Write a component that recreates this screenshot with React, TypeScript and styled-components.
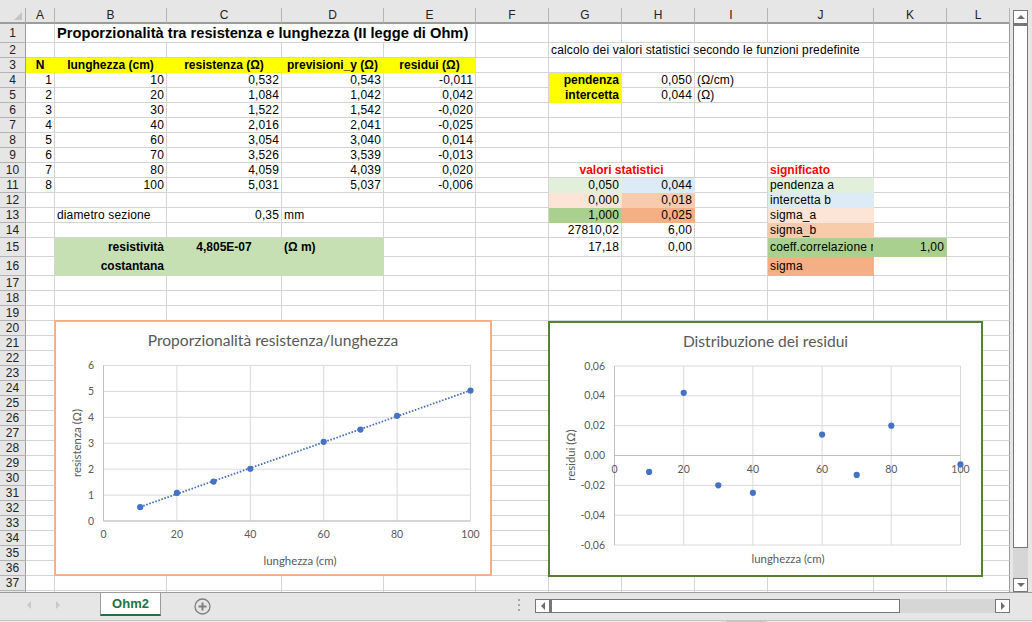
import { Fragment } from "react";
import styled, { createGlobalStyle } from "styled-components";

const COLS = ["A", "B", "C", "D", "E", "F", "G", "H", "I", "J", "K", "L"];
const COL_WIDTHS = [29, 112, 115, 102, 92, 73, 73, 73, 73, 106, 73, 63];
const ROW_COUNT = 38;

const YELLOW = "#ffff00";
const GREEN = "#c6e0b4";
const GREEN_LIGHT = "#e2efda";
const GREEN_DARK = "#a9d08e";
const BLUE = "#ddebf7";
const PEACH_LIGHT = "#fce4d6";
const PEACH = "#f8cbad";
const ORANGE = "#f4b084";

const rowHeight = (row: number) =>
  row === 1 || row === 15 || row === 16 ? 19 : 15;

const GlobalStyle = createGlobalStyle`
  html, body {
    margin: 0;
    padding: 0;
    background: #e6e6e6;
  }
`;

const Window = styled.div`
  width: 1032px;
  height: 622px;
  overflow: hidden;
  display: flex;
  flex-direction: column;
  background: #e6e6e6;
  font-family: "Liberation Sans", Arial, sans-serif;
  font-size: 12px;
  color: #000;
`;

const TopStrip = styled.div`
  height: 8px;
  flex: none;
`;

const Middle = styled.div`
  height: 584px;
  flex: none;
  display: flex;
`;

const Sheet = styled.div`
  position: relative;
  width: 1010px;
  height: 584px;
  overflow: hidden;
  background: #fff;
`;

const SheetGrid = styled.div`
  display: grid;
  grid-template-columns: 26px ${COL_WIDTHS.map((w) => `${w}px`).join(" ")};
  grid-template-rows: 16px ${Array.from(
    { length: ROW_COUNT },
    (_, i) => `${rowHeight(i + 1)}px`
  ).join(" ")};
`;

const Corner = styled.div`
  position: relative;
  background: #e6e6e6;
  border-right: 1px solid #ababab;
  border-bottom: 2px solid #9c9c9c;
  box-sizing: border-box;
  &::after {
    content: "";
    position: absolute;
    right: 3px;
    bottom: 2px;
    border-style: solid;
    border-width: 0 0 8px 8px;
    border-color: transparent transparent #c4c4c4 transparent;
  }
`;

const ColHeader = styled.div`
  background: #e6e6e6;
  box-sizing: border-box;
  border-right: 1px solid #b4b4b4;
  border-bottom: 2px solid #9c9c9c;
  display: flex;
  align-items: center;
  justify-content: center;
  font-size: 12px;
  color: #222;
`;

const RowHeader = styled.div`
  background: #e6e6e6;
  box-sizing: border-box;
  border-right: 1px solid #9c9c9c;
  border-bottom: 1px solid #b4b4b4;
  display: flex;
  align-items: center;
  justify-content: center;
  font-size: 12px;
  color: #222;
`;

const JUSTIFY = { left: "flex-start", right: "flex-end", center: "center" };

const Cell = styled.div<{
  $fill?: string;
  $bold?: boolean;
  $align?: "left" | "right" | "center";
  $color?: string;
  $span?: number;
  $size?: number;
  $edge?: boolean;
}>`
  box-sizing: border-box;
  min-width: 0;
  overflow: hidden;
  white-space: nowrap;
  display: flex;
  align-items: center;
  padding: 0 2px;
  grid-column: span ${(p) => p.$span ?? 1};
  justify-content: ${(p) => JUSTIFY[p.$align ?? "left"]};
  background: ${(p) => p.$fill ?? "#fff"};
  color: ${(p) => p.$color ?? "#000"};
  font-weight: ${(p) => (p.$bold ? 700 : 400)};
  font-size: ${(p) => p.$size ?? 12}px;
  letter-spacing: ${(p) => (p.$bold ? 0 : 0.14)}px;
  border-bottom: 1px solid ${(p) => p.$fill ?? "#d4d4d4"};
  border-right: 1px solid
    ${(p) => (p.$edge ? "#9c9c9c" : p.$fill ?? "#d4d4d4")};
`;

const ChartCard = styled.div<{ $border: string; $x: number; $y: number; $w: number; $h: number }>`
  position: absolute;
  box-sizing: border-box;
  left: ${(p) => p.$x}px;
  top: ${(p) => p.$y - 8}px;
  width: ${(p) => p.$w}px;
  height: ${(p) => p.$h}px;
  border: 2px solid ${(p) => p.$border};
  background: #fff;
  svg {
    display: block;
    width: 100%;
    height: 100%;
  }
`;

const ChartTitle = styled.text`
  font-family: Lato, "Open Sans", sans-serif;
  font-size: 15.6px;
  fill: #595959;
  text-anchor: middle;
`;

const AxisLabel = styled.text<{ $anchor?: string; $size?: number }>`
  font-family: Lato, "Open Sans", sans-serif;
  font-size: ${(p) => p.$size ?? 10.5}px;
  fill: #595959;
  text-anchor: ${(p) => p.$anchor ?? "middle"};
`;

const VScroll = styled.div`
  width: 15px;
  margin-left: 3px;
  padding-top: 2px;
  display: flex;
  flex-direction: column;
`;

const ScrollButton = styled.div<{ $w?: number }>`
  box-sizing: border-box;
  flex: none;
  width: ${(p) => p.$w ?? 15}px;
  height: 14px;
  background: #fff;
  border: 1px solid #777;
  display: flex;
  align-items: center;
  justify-content: center;
`;

const VThumb = styled.div`
  box-sizing: border-box;
  height: 524px;
  flex: none;
  background: #fff;
  border: 1px solid #777;
  border-top-width: 2px;
`;

const VTrack = styled.div`
  flex: 1;
  background: #d6d6d6;
`;

const Triangle = styled.span<{ $dir: "up" | "down" | "left" | "right"; $color?: string; $size?: number }>`
  width: 0;
  height: 0;
  border-style: solid;
  border-color: transparent;
  ${(p) => {
    const c = p.$color ?? "#6e6e6e";
    const s = p.$size ?? 4;
    if (p.$dir === "up") return `border-width: 0 ${s}px ${s}px; border-bottom-color: ${c};`;
    if (p.$dir === "down") return `border-width: ${s}px ${s}px 0; border-top-color: ${c};`;
    if (p.$dir === "left") return `border-width: ${s}px ${s}px ${s}px 0; border-right-color: ${c};`;
    return `border-width: ${s}px 0 ${s}px ${s}px; border-left-color: ${c};`;
  }}
`;

const TabBar = styled.div`
  box-sizing: border-box;
  flex: none;
  height: 29px;
  display: flex;
  align-items: flex-start;
  border-top: 1px solid #9c9c9c;
  border-bottom: 1px solid #c6c6c6;
`;

const TabNav = styled.div`
  width: 100px;
  height: 24px;
  flex: none;
  padding-left: 27px;
  box-sizing: border-box;
  display: flex;
  align-items: center;
  gap: 25px;
`;

const Tab = styled.div`
  box-sizing: border-box;
  width: 61px;
  height: 24px;
  flex: none;
  margin-top: -1px;
  background: #fff;
  border: 1px solid #9c9c9c;
  border-top: 1px solid #9c9c9c;
  border-bottom: 2px solid #217346;
  display: flex;
  align-items: center;
  justify-content: center;
  font-weight: 700;
  font-size: 13px;
  color: #217346;
`;

const AddSheet = styled.svg`
  flex: none;
  width: 17px;
  height: 17px;
  margin: 5px 0 0 33px;
`;

const Grip = styled.div`
  flex: none;
  margin: 6px 0 0 307px;
  display: flex;
  flex-direction: column;
  gap: 3px;
  span {
    width: 2px;
    height: 2px;
    background: #a6a6a6;
  }
`;

const HScroll = styled.div`
  flex: none;
  width: 475px;
  height: 14px;
  margin: 6px 0 0 15px;
  display: flex;
  background: #d6d6d6;
`;

const HThumb = styled.div`
  box-sizing: border-box;
  flex: none;
  width: 350px;
  background: #fff;
  border: 1px solid #777;
  border-left-width: 2px;
`;

const HSpacer = styled.div`
  flex: 1;
`;

const BottomEdge = styled.div`
  flex: 1;
  position: relative;
  &::after {
    content: "";
    position: absolute;
    left: 726px;
    top: 0;
    width: 40px;
    height: 1px;
    background: #c6c6c6;
  }
`;

type CellSpec = {
  text?: string;
  fill?: string;
  bold?: boolean;
  align?: "left" | "right" | "center";
  color?: string;
  span?: number;
  size?: number;
};

const cells: Record<string, CellSpec> = {
  B1: { text: "Proporzionalità tra resistenza e lunghezza (II legge di Ohm)", bold: true, span: 4, size: 14.67 },
  G2: { text: "calcolo dei valori statistici secondo le funzioni predefinite", span: 4 },
  G4: { text: "pendenza", fill: YELLOW, bold: true, align: "right" },
  G5: { text: "intercetta", fill: YELLOW, bold: true, align: "right" },
  H4: { text: "0,050", align: "right" },
  H5: { text: "0,044", align: "right" },
  I4: { text: "(Ω/cm)" },
  I5: { text: "(Ω)" },
  A3: { text: "N", fill: YELLOW, bold: true, align: "center" },
  B3: { text: "lunghezza (cm)", fill: YELLOW, bold: true, align: "center" },
  C3: { text: "resistenza (Ω)", fill: YELLOW, bold: true, align: "center" },
  D3: { text: "previsioni_y (Ω)", fill: YELLOW, bold: true, align: "center" },
  E3: { text: "residui (Ω)", fill: YELLOW, bold: true, align: "center" },
  B13: { text: "diametro sezione" },
  C13: { text: "0,35", align: "right" },
  D13: { text: "mm" },
  B15: { text: "resistività", fill: GREEN, bold: true, align: "right" },
  C15: { text: "4,805E-07", fill: GREEN, bold: true, align: "center" },
  D15: { text: "(Ω m)", fill: GREEN, bold: true },
  B16: { text: "costantana", fill: GREEN, bold: true, align: "right" },
  C16: { fill: GREEN },
  D16: { fill: GREEN },
  G10: { text: "valori statistici", bold: true, align: "center", color: "#ff0000", span: 2 },
  J10: { text: "significato", bold: true, color: "#ff0000" },
  G11: { text: "0,050", fill: GREEN_LIGHT, align: "right" },
  H11: { text: "0,044", fill: BLUE, align: "right" },
  G12: { text: "0,000", fill: PEACH_LIGHT, align: "right" },
  H12: { text: "0,018", fill: PEACH, align: "right" },
  G13: { text: "1,000", fill: GREEN_DARK, align: "right" },
  H13: { text: "0,025", fill: ORANGE, align: "right" },
  G14: { text: "27810,02", align: "right" },
  H14: { text: "6,00", align: "right" },
  G15: { text: "17,18", align: "right" },
  H15: { text: "0,00", align: "right" },
  J11: { text: "pendenza a", fill: GREEN_LIGHT },
  J12: { text: "intercetta b", fill: BLUE },
  J13: { text: "sigma_a", fill: PEACH_LIGHT },
  J14: { text: "sigma_b", fill: PEACH },
  J15: { text: "coeff.correlazione r", fill: GREEN_DARK },
  K15: { text: "1,00", fill: GREEN_DARK, align: "right" },
  J16: { text: "sigma", fill: ORANGE },
};

const measures = [
  [1, 10, "0,532", "0,543", "-0,011"],
  [2, 20, "1,084", "1,042", "0,042"],
  [3, 30, "1,522", "1,542", "-0,020"],
  [4, 40, "2,016", "2,041", "-0,025"],
  [5, 60, "3,054", "3,040", "0,014"],
  [6, 70, "3,526", "3,539", "-0,013"],
  [7, 80, "4,059", "4,039", "0,020"],
  [8, 100, "5,031", "5,037", "-0,006"],
];

measures.forEach((m, i) => {
  ["A", "B", "C", "D", "E"].forEach((col, c) => {
    cells[`${col}${i + 4}`] = { text: String(m[c]), align: "right" };
  });
});

const toNum = (s: string | number) => parseFloat(String(s).replace(",", "."));

type Box = { x: number; y: number; w: number; h: number };
type Plot = { left: number; right: number; top: number; bottom: number };

interface ChartProps {
  box: Box;
  plot: Plot;
  border: string;
  title: string;
  titleX: number;
  titleY: number;
  yTitle: string;
  yTitleX: number;
  yTitleY: number;
  xTitleX: number;
  xTitleY: number;
  yMin: number;
  yMax: number;
  yStep: number;
  yDigits: number;
  yLabelX: number;
  xLabelY: number;
  points: [number, number][];
  trend?: [number, number][];
}

function ScatterChart(props: ChartProps) {
  const { box, plot, points, trend, yMin, yMax, yStep, yDigits } = props;
  const px = (v: number) => plot.left + (v / 100) * (plot.right - plot.left);
  const py = (v: number) =>
    plot.bottom - ((v - yMin) / (yMax - yMin)) * (plot.bottom - plot.top);
  const yTicks: number[] = [];
  const n = Math.round((yMax - yMin) / yStep);
  for (let i = 0; i <= n; i++) yTicks.push(yMin + i * yStep);
  const xTicks = [0, 20, 40, 60, 80, 100];
  const zeroY = py(Math.max(0, yMin));

  return (
    <ChartCard $border={props.border} $x={box.x} $y={box.y} $w={box.w} $h={box.h}>
      <svg viewBox={`${box.x + 2} ${box.y + 2} ${box.w - 4} ${box.h - 4}`}>
        <ChartTitle x={props.titleX} y={props.titleY}>
          {props.title}
        </ChartTitle>
        {yTicks.map((t) => (
          <line key={t} x1={plot.left} x2={plot.right} y1={py(t)} y2={py(t)} stroke="#d9d9d9" />
        ))}
        {xTicks.map((t) => (
          <line key={t} x1={px(t)} x2={px(t)} y1={plot.top} y2={plot.bottom} stroke="#d9d9d9" />
        ))}
        <line x1={plot.left} x2={plot.left} y1={plot.top} y2={plot.bottom} stroke="#bfbfbf" />
        <line x1={plot.left} x2={plot.right} y1={zeroY} y2={zeroY} stroke="#bfbfbf" />
        {yTicks.map((t) => (
          <AxisLabel key={t} x={props.yLabelX} y={py(t) + 3.5} $anchor="end">
            {t.toFixed(yDigits).replace(".", ",").replace(/^-0,00$/, "0,00")}
          </AxisLabel>
        ))}
        {xTicks.map((t) => (
          <AxisLabel key={t} x={px(t)} y={props.xLabelY}>
            {t}
          </AxisLabel>
        ))}
        <AxisLabel
          x={props.yTitleX}
          y={props.yTitleY}
          $size={11.4}
          transform={`rotate(-90 ${props.yTitleX} ${props.yTitleY})`}
        >
          {props.yTitle}
        </AxisLabel>
        <AxisLabel x={props.xTitleX} y={props.xTitleY} $size={11.4}>
          lunghezza (cm)
        </AxisLabel>
        {trend && (
          <line
            x1={px(trend[0][0])}
            y1={py(trend[0][1])}
            x2={px(trend[1][0])}
            y2={py(trend[1][1])}
            stroke="#4472c4"
            strokeWidth="1.8"
            strokeDasharray="1.6 1.6"
          />
        )}
        {points.map(([x, y]) => (
          <circle key={x} cx={px(x)} cy={py(y)} r="3.1" fill="#4472c4" />
        ))}
      </svg>
    </ChartCard>
  );
}

const resistancePoints = measures.map(
  (m) => [Number(m[1]), toNum(m[2])] as [number, number]
);
const residualPoints = measures.map(
  (m) => [Number(m[1]), toNum(m[4])] as [number, number]
);

export default function App() {
  const skipped = new Set<string>();
  Object.entries(cells).forEach(([key, cell]) => {
    if (!cell.span) return;
    const col = COLS.indexOf(key[0]);
    const row = key.slice(1);
    for (let i = 1; i < cell.span; i++) skipped.add(`${COLS[col + i]}${row}`);
  });

  return (
    <Window>
      <GlobalStyle />
      <TopStrip />
      <Middle>
        <Sheet>
          <SheetGrid>
            <Corner />
            {COLS.map((c) => (
              <ColHeader key={c}>{c}</ColHeader>
            ))}
            {Array.from({ length: ROW_COUNT }, (_, i) => i + 1).map((row) => (
              <Fragment key={row}>
                {/* row 38 only peeks out below the last visible row, no label */}
                <RowHeader>{row < ROW_COUNT ? row : ""}</RowHeader>
                {COLS.map((col) => {
                  const id = `${col}${row}`;
                  if (skipped.has(id)) return null;
                  const c = cells[id] ?? {};
                  return (
                    <Cell
                      key={id}
                      $fill={c.fill}
                      $bold={c.bold}
                      $align={c.align}
                      $color={c.color}
                      $span={c.span}
                      $size={c.size}
                      $edge={col === "L"}
                    >
                      {c.text}
                    </Cell>
                  );
                })}
              </Fragment>
            ))}
          </SheetGrid>
          <ScatterChart
            box={{ x: 54, y: 320, w: 438, h: 256 }}
            plot={{ left: 103.5, right: 470.5, top: 365.5, bottom: 521 }}
            border="#f4b084"
            title="Proporzionalità resistenza/lunghezza"
            titleX={273}
            titleY={346}
            yTitle="resistenza (Ω)"
            yTitleX={81}
            yTitleY={443}
            xTitleX={300}
            xTitleY={565}
            yMin={0}
            yMax={6}
            yStep={1}
            yDigits={0}
            yLabelX={94}
            xLabelY={538}
            points={resistancePoints}
            trend={[
              [10, 0.543],
              [100, 5.037],
            ]}
          />
          <ScatterChart
            box={{ x: 548, y: 321, w: 435, h: 256 }}
            plot={{ left: 614.5, right: 960.5, top: 366, bottom: 545 }}
            border="#548235"
            title="Distribuzione dei residui"
            titleX={765.5}
            titleY={347}
            yTitle="residui (Ω)"
            yTitleX={575}
            yTitleY={455}
            xTitleX={788}
            xTitleY={563}
            yMin={-0.06}
            yMax={0.06}
            yStep={0.02}
            yDigits={2}
            yLabelX={605}
            xLabelY={473}
            points={residualPoints}
          />
        </Sheet>
        <VScroll>
          <ScrollButton>
            <Triangle $dir="up" />
          </ScrollButton>
          <VThumb />
          <VTrack />
          <ScrollButton>
            <Triangle $dir="down" />
          </ScrollButton>
        </VScroll>
      </Middle>
      <TabBar>
        <TabNav>
          <Triangle $dir="left" $color="#c8c8c8" />
          <Triangle $dir="right" $color="#c8c8c8" />
        </TabNav>
        <Tab>Ohm2</Tab>
        <AddSheet viewBox="0 0 17 17">
          <circle cx="8.5" cy="8.5" r="7.5" fill="none" stroke="#7f7f7f" strokeWidth="1.3" />
          <path d="M8.5 4.5v8M4.5 8.5h8" stroke="#7f7f7f" strokeWidth="2" />
        </AddSheet>
        <Grip>
          <span />
          <span />
          <span />
        </Grip>
        <HScroll>
          <ScrollButton>
            <Triangle $dir="left" />
          </ScrollButton>
          <HThumb />
          <HSpacer />
          <ScrollButton>
            <Triangle $dir="right" />
          </ScrollButton>
        </HScroll>
      </TabBar>
      <BottomEdge />
    </Window>
  );
}
